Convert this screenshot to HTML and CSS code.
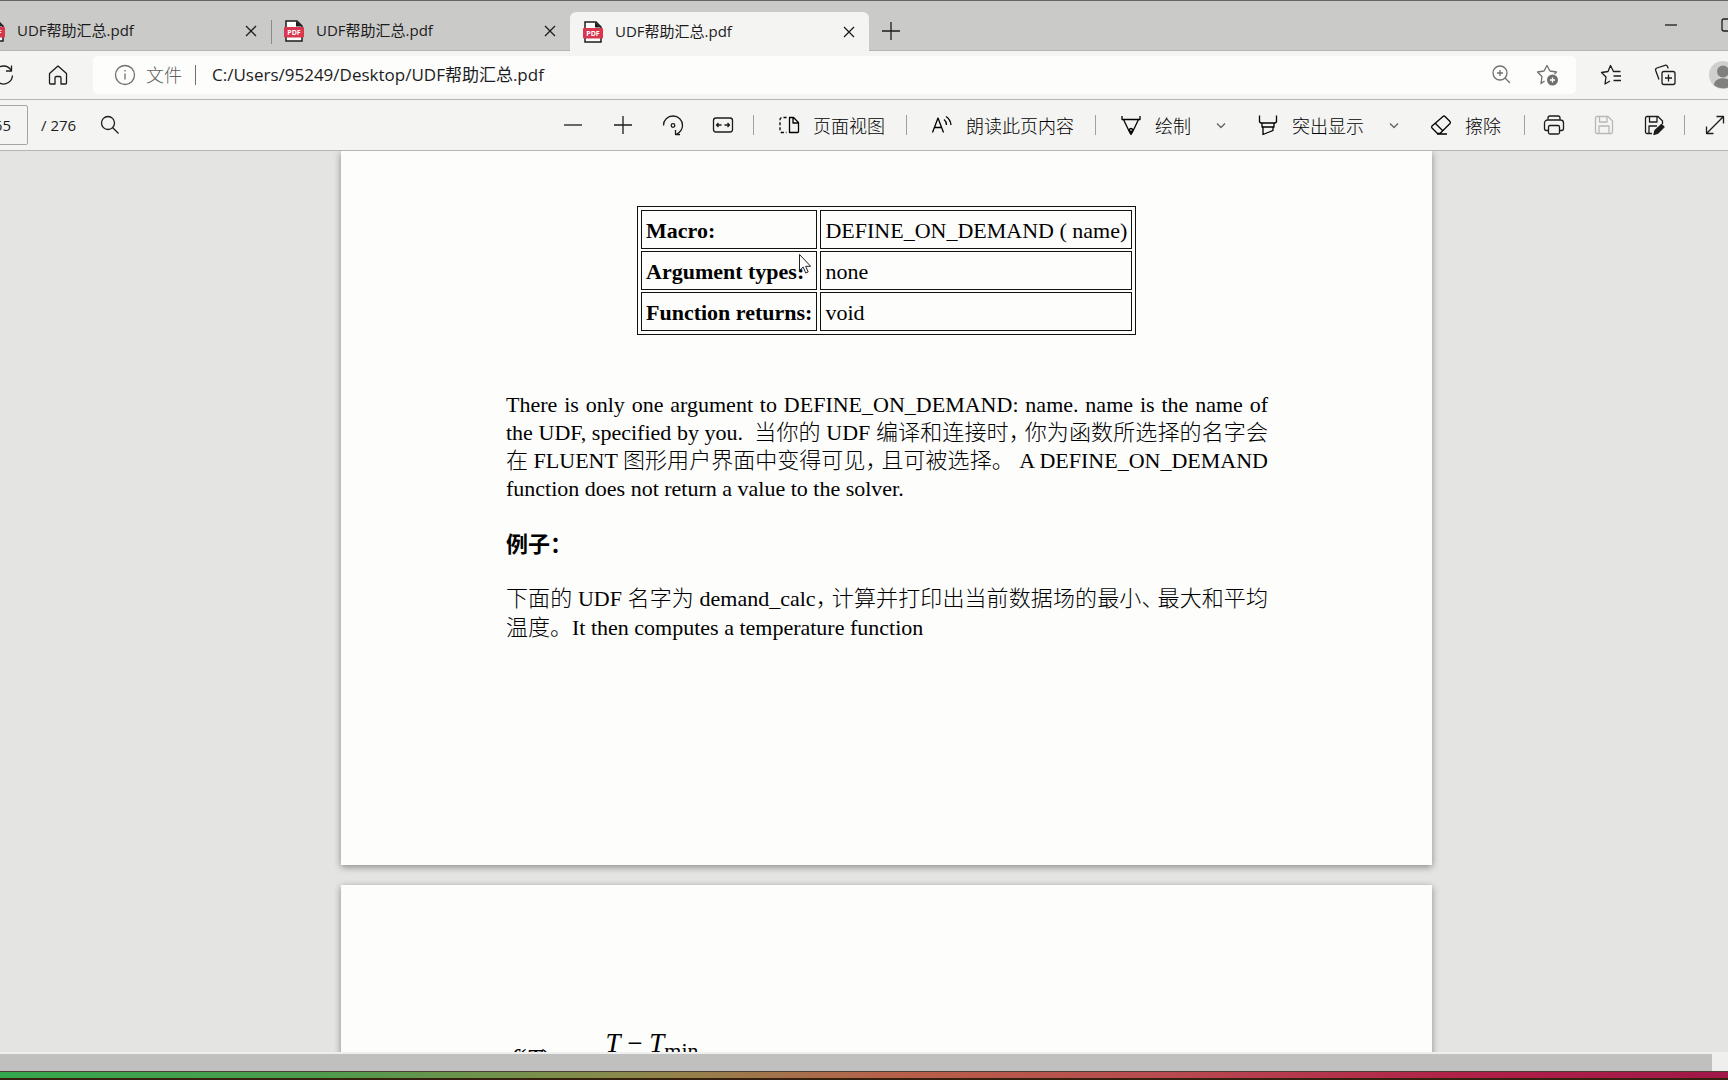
FILE: index.html
```html
<!DOCTYPE html>
<html lang="zh-CN">
<head>
<meta charset="utf-8">
<title>UDF帮助汇总.pdf</title>
<link rel="stylesheet" href="styles.css">
</head>
<body>
<svg class="sprite" aria-hidden="true">
  <symbol id="pdf" viewBox="0 0 20 22">
    <path d="M2 1h11l5 5v15H2z" fill="#fff" stroke="#1c1c1c" stroke-width="1.500"/>
    <path d="M12 1v5.500h6z" fill="#1c1c1c"/>
    <rect x="0" y="7" width="20" height="10.500" rx="1" fill="#d9364f"/>
    <text x="10" y="15" text-anchor="middle" class="pdf-label">PDF</text>
  </symbol>
  <symbol id="close" viewBox="0 0 20 20"><path d="M5 5l10 10M15 5L5 15"/></symbol>
  <symbol id="plus" viewBox="0 0 20 20"><path d="M10 1v18M1 10h18"/></symbol>
  <symbol id="minus" viewBox="0 0 20 20"><path d="M1 10h18"/></symbol>
  <symbol id="chevron" viewBox="0 0 10 10"><path d="M1 3.500l4 4 4-4"/></symbol>
</svg>

<header class="tabs">
  <div class="tab">
    <svg class="pdf"><use href="#pdf"/></svg><span class="tab-title">UDF帮助汇总.pdf</span>
    <button class="plain" aria-label="关闭标签页"><svg class="icon"><use href="#close"/></svg></button>
  </div>
  <div class="tab divided">
    <svg class="pdf"><use href="#pdf"/></svg><span class="tab-title">UDF帮助汇总.pdf</span>
    <button class="plain" aria-label="关闭标签页"><svg class="icon"><use href="#close"/></svg></button>
  </div>
  <div class="tab active">
    <svg class="pdf"><use href="#pdf"/></svg><span class="tab-title">UDF帮助汇总.pdf</span>
    <button class="plain" aria-label="关闭标签页"><svg class="icon"><use href="#close"/></svg></button>
  </div>
  <button class="plain new-tab" aria-label="新建标签页"><svg class="icon"><use href="#plus"/></svg></button>
  <div class="window-controls">
    <button class="plain" aria-label="最小化"><svg class="icon" viewBox="0 0 20 20"><path d="M4 10h12"/></svg></button>
    <button class="plain" aria-label="最大化"><svg class="icon" viewBox="0 0 20 20"><rect x="4" y="4" width="12" height="12" rx="2"/></svg></button>
  </div>
</header>

<nav class="address-row">
  <button class="plain" aria-label="刷新"><svg class="icon" viewBox="0 0 20 20"><path d="M19.500 10.500A9 9 0 1 1 18 5M18.500 0.500V6H13"/></svg></button>
  <button class="plain home" aria-label="主页"><svg class="icon" viewBox="0 0 20 20"><path d="M1.500 8.500L10 1l8.500 7.500V18a1 1 0 0 1-1 1H13v-6a1.500 1.500 0 0 0-1.500-1.500h-3A1.500 1.500 0 0 0 7 13v6H2.500a1 1 0 0 1-1-1z"/></svg></button>
  <div class="address">
    <svg class="icon gray" viewBox="0 0 20 20"><circle cx="10" cy="10" r="9.500"/><path d="M10 8.500v6M10 5v1.500"/></svg>
    <label class="scheme" for="url">文件</label>
    <i class="bar"></i>
    <input id="url" class="url" type="text" value="C:/Users/95249/Desktop/UDF帮助汇总.pdf">
    <button class="plain" aria-label="缩放"><svg class="icon gray" viewBox="0 0 20 20"><circle cx="9" cy="8" r="7"/><path d="M14 13l5 5M9 5v6M6 8h6"/></svg></button>
    <button class="plain star" aria-label="收藏"><svg class="icon gray" viewBox="0 0 20 20"><path d="M7.500 16L4 18.500l1-7L0.500 7l6.500-1L10 0.500 13 6l6.500 1-2 2"/><circle cx="15.500" cy="15" r="5.500" class="solid"/><path class="white" d="M15.500 12.500v5M13 15h5"/></svg></button>
  </div>
  <div class="browser-tools">
    <button class="plain" aria-label="收藏夹"><svg class="icon" viewBox="0 0 20 20"><path d="M9 16l-5 3 1-7L0.500 7.500 7 6.500 9.500 0.500 12.500 6.500h7M12.500 11H20M12.500 15.500H20"/></svg></button>
    <button class="plain" aria-label="集锦"><svg class="icon" viewBox="0 0 20 20"><rect x="7" y="6.500" width="13" height="13" rx="2"/><path d="M13.500 9.500v7M10 13h7M4 14.500L.7 5.500a2 2 0 0 1 1.200-2.500L10 .3a2 2 0 0 1 2.500 1.200l.7 2"/></svg></button>
    <button class="plain" aria-label="个人资料"><svg class="avatar" viewBox="0 0 28 28"><circle cx="14" cy="14" r="14" fill="#d0d0cf"/><circle cx="14" cy="10.500" r="6" fill="#80807f"/><path d="M5 24c0-9 18-9 18 0a14 14 0 0 1-18 0z" fill="#80807f"/></svg></button>
  </div>
</nav>

<div class="toolbar">
  <div class="pager">
    <input class="page-number" type="text" value="65" aria-label="页码">
    <span class="total">/ 276</span>
    <button class="plain" aria-label="查找"><svg class="icon" viewBox="0 0 20 20"><circle cx="8" cy="8" r="6.500"/><path d="M12.500 12.500l6 6"/></svg></button>
  </div>
  <div class="tools">
    <button class="plain" aria-label="缩小"><svg class="icon"><use href="#minus"/></svg></button>
    <button class="plain" aria-label="放大"><svg class="icon"><use href="#plus"/></svg></button>
    <button class="plain" aria-label="旋转"><svg class="icon" viewBox="0 0 20 20"><path d="M0.500 10.500C0.500 5 4.500 1 10 1s9.500 4 9.500 9.500c0 3.500-2.500 7-6.500 9M12.500 15v4.500H17"/><circle cx="10" cy="10.500" r="1.800"/></svg></button>
    <button class="plain" aria-label="适应宽度"><svg class="icon" viewBox="0 0 20 20"><rect x="0.500" y="3" width="19" height="14" rx="2.500"/><path d="M3.500 10H8.500M5.500 8L3.500 10l2 2M11.500 10h5M14.500 8l2 2-2 2"/></svg></button>
  </div>
  <div class="group view"><button class="plain labelled"><svg class="icon" viewBox="0 0 20 20"><path d="M10.500 2.500h4l5 5v9a1 1 0 0 1-1 1h-8zM14 2.500V8h5.500"/><path class="dash" d="M7.500 2.500H3a2 2 0 0 0-2 2v11a2 2 0 0 0 2 2h4.500"/></svg>页面视图</button></div>
  <div class="group read"><button class="plain labelled"><svg class="icon" viewBox="0 0 20 20"><path d="M0.500 17.500L6 3l5.500 14.500M2.500 12.500h7M12 4.500q2.500 2 2.500 5.500M14 1.500q4.500 3 5 8.500"/></svg>朗读此页内容</button></div>
  <div class="group draw">
    <button class="plain labelled"><svg class="icon" viewBox="0 0 20 20"><path d="M1 1v3.500h18V1M2.500 4.500l6 12.500h3l6-12.500M8.500 17l1.500 2.500 1.500-2.500"/><circle cx="10" cy="15" r="1.500"/></svg>绘制</button>
    <button class="plain more" aria-label="绘制选项"><svg class="chev"><use href="#chevron"/></svg></button>
    <button class="plain labelled"><svg class="icon" viewBox="0 0 20 20"><path d="M1.500 0.500V6a2 2 0 0 0 2 2h13a2 2 0 0 0 2-2V0.500M4 8v4h12V8M5 12v7.500l10-4V12"/></svg>突出显示</button>
    <button class="plain more" aria-label="突出显示选项"><svg class="chev"><use href="#chevron"/></svg></button>
    <button class="plain labelled"><svg class="icon" viewBox="0 0 20 20"><path d="M12 1.500a1.500 1.500 0 0 1 2 0l5 5a1.500 1.500 0 0 1 0 2L9 18.500H6.500L1 13a1.500 1.500 0 0 1 0-2zM4.500 8.500l7.500 7.500M6 19h10"/></svg>擦除</button>
  </div>
  <div class="group files">
    <button class="plain" aria-label="打印"><svg class="icon" viewBox="0 0 20 20"><path d="M4 5V3a2 2 0 0 1 2-2h8a2 2 0 0 1 2 2v2M4 15.500H2.500a2 2 0 0 1-2-2V8a3 3 0 0 1 3-3h13a3 3 0 0 1 3 3v5.500a2 2 0 0 1-2 2H16"/><rect x="4.500" y="10.500" width="11" height="8.500" rx="1.500"/></svg></button>
    <button class="plain" aria-label="保存" disabled><svg class="icon pale" viewBox="0 0 20 20"><path d="M3 1.500h11l4.500 4.500v11a1.500 1.500 0 0 1-1.500 1.500H3A1.500 1.500 0 0 1 1.500 17V3A1.500 1.500 0 0 1 3 1.500zM5.500 1.500V7h7.500V1.500M5 18.500V11h10v7.500"/></svg></button>
    <button class="plain" aria-label="另存为"><svg class="icon" viewBox="0 0 20 20"><path d="M8 18.500H3A1.500 1.500 0 0 1 1.500 17V3A1.500 1.500 0 0 1 3 1.500h11L18.500 6v3M5.500 1.500V7h7.500V1.500M5 18.500V11h8"/><path d="M10 19.500l1-4 6.500-6 2.500 2.500-6.500 6.500z" fill="currentColor"/></svg></button>
  </div>
  <div class="group full"><button class="plain" aria-label="全屏"><svg class="icon" viewBox="0 0 20 20"><path d="M2 18L18 2M11.500 1.500h7v7M1.500 11.500v7h7"/></svg></button></div>
</div>

<main class="viewer">
  <article class="page first">
    <table class="macro">
      <tr><th scope="row">Macro:</th><td>DEFINE_ON_DEMAND ( name)</td></tr>
      <tr><th scope="row">Argument types:</th><td>none</td></tr>
      <tr><th scope="row">Function returns:</th><td>void</td></tr>
    </table>
    <svg class="cursor" viewBox="0 0 12 20"><path d="M.5.5v16l3.700-3.500 2.500 6 2.500-1-2.500-5.700h5z" fill="#fff" stroke="#222"/></svg>
    <p class="text">
      <span class="line">There is only one argument to DEFINE_ON_DEMAND: name. name is the name of</span>
      <span class="line">the UDF, specified by you.&nbsp; 当你的 UDF 编译和连接时<span class="mark">，</span>你为函数所选择的名字会</span>
      <span class="line">在 FLUENT 图形用户界面中变得可见<span class="mark">，</span>且可被选择。 A DEFINE_ON_DEMAND</span>
      <span class="line last">function does not return a value to the solver.</span>
    </p>
    <h2 class="heading">例子：</h2>
    <p class="text loose">
      <span class="line">下面的 UDF 名字为 demand_calc<span class="mark">，</span>计算并打印出当前数据场的最小<span class="mark">、</span>最大和平均</span>
      <span class="line last">温度。It then computes a temperature function</span>
    </p>
  </article>
  <article class="page second">
    <div class="formula"><span class="lhs"><i>f</i>(<i>T</i>)</span><span class="numerator"><i>T</i> − <i>T</i><sub>min</sub></span></div>
  </article>
</main>
<div class="scrollbar"><div class="thumb"></div></div>
<footer class="desktop"></footer>
</body>
</html>
```
FILE: styles.css
```css
* { box-sizing: border-box; }
body {
  margin: 0;
  height: 100vh;
  display: flex;
  flex-direction: column;
  overflow: hidden;
  background: #e4e4e3;
  color: #1c1c1c;
  font-family: "Open Sans", "Noto Sans CJK SC", sans-serif;
  font-size: 18px;
}
.sprite { display: none; }
.icon { display: block; width: 20px; height: 20px; flex: none; overflow: visible; }
.icon, .chev { fill: none; stroke: currentColor; stroke-width: 1.3; stroke-linejoin: round; }
.gray { color: #707070; }
.pale { color: #b8b8b7; }
.solid { fill: currentColor; stroke: none; }
.white { stroke: #fff; }
.dash { stroke-dasharray: 3 2; }
.chev { display: block; width: 10px; height: 10px; color: #606060; }
.plain { border: 0; padding: 0; background: none; color: inherit; font: inherit; flex: none; }

.tabs {
  flex: none;
  display: flex;
  height: 51px;
  padding-top: 11px;
  border-top: 1px solid #666564;
  border-bottom: 1px solid #b5b5b4;
  background: #cacac9;
}
.tab {
  width: 299px;
  flex: none;
  display: flex;
  align-items: center;
  gap: 12px;
  padding: 0 10px 0 13px;
  font-size: 15px;
  position: relative;
}
.tab:first-child { margin-left: -28px; }
.divided::before { content: ""; position: absolute; left: 0; top: 8px; width: 1px; height: 24px; background: #8a8a89; }
.active { background: #f4f4f3; border-radius: 6px 6px 0 0; margin-bottom: -1px; }
.pdf { width: 20px; height: 22px; flex: none; }
.pdf-label { font: bold 7px "Open Sans", sans-serif; fill: #fff; }
.tab-title { flex: 1; padding-bottom: 3px; }
.new-tab { margin-left: 12px; }
.window-controls { margin: -4px -10px 0 auto; display: flex; gap: 37px; }
.window-controls .plain { height: 34px; }

.address-row {
  flex: none;
  display: flex;
  align-items: center;
  height: 49px;
  border-bottom: 1px solid #b5b5b4;
  background: #f4f4f3;
}
.address-row > .plain:first-child { margin-left: -7px; }
.home { margin-left: 35px; }
.address {
  flex: 1;
  min-width: 0;
  display: flex;
  align-items: center;
  height: 38px;
  margin-left: 25px;
  padding: 0 19px 0 22px;
  border-radius: 5px;
  background: #fdfdfc;
}
.scheme { margin-left: 11px; padding-bottom: 3px; color: #606060; font-weight: 300; }
.bar { width: 1px; height: 20px; margin: 0 16px 0 13px; background: #707070; }
.url { flex: 1; min-width: 0; border: 0; padding: 0 0 3px; background: none; color: inherit; font: inherit; font-size: 17px; }
.star { margin-left: 26px; }
.browser-tools { display: flex; align-items: center; gap: 34px; margin: 0 -9px 0 25px; }
.avatar { display: block; width: 28px; height: 28px; }

.toolbar {
  flex: none;
  display: flex;
  align-items: center;
  height: 51px;
  border-bottom: 1px solid #b5b5b4;
  background: #f4f4f3;
}
.toolbar .plain, .pager { display: flex; align-items: center; }
.pager { margin-right: auto; }
.page-number {
  width: 60px;
  height: 40px;
  margin-left: -32px;
  padding: 0 16px 0 0;
  border: 1px solid #a5a5a4;
  border-radius: 2px;
  background: none;
  text-align: right;
  color: inherit;
  font: inherit;
  font-size: 15px;
}
.total { font-size: 15px; margin: 0 24px 0 13px; }
.tools { display: flex; gap: 30px; padding-right: 20px; }
.group { display: flex; align-items: center; position: relative; padding-left: 26px; }
.group::before { content: ""; position: absolute; left: 0; top: 50%; width: 1px; height: 20px; margin-top: -10px; background: #a0a09f; }
.toolbar .labelled { gap: 14px; color: #000; font-weight: 300; }
.view, .read { padding-right: 21px; }
.draw { padding-right: 23px; }
.more { margin: 0 32px 0 25px; }
.files { gap: 30px; padding: 0 20px; }
.full { padding: 0 3px 0 21px; }

.viewer {
  flex: 1;
  min-height: 0;
  overflow: hidden;
  display: flex;
  flex-direction: column;
  align-items: center;
  gap: 20px;
  padding-left: 45px;
}
.page {
  flex: none;
  position: relative;
  width: 1091px;
  padding: 0 164px 0 165px;
  background: #fdfdfc;
  box-shadow: 0 2px 7px rgba(0, 0, 0, 0.4);
  color: #000;
  font: 22px/28px "Liberation Serif", "Noto Sans CJK SC", serif;
}
.first { height: 714px; padding-top: 55px; }
.second { height: 714px; padding-top: 144px; }
.macro { width: 498px; margin: 0 auto 56px 131px; border: 1px solid #111; border-spacing: 3px 2px; padding: 1px 0; }
.macro th, .macro td { height: 39px; border: 1px solid #111; padding: 2px 4px 0; text-align: left; white-space: nowrap; }
.cursor { position: absolute; left: 458px; top: 103px; width: 12px; height: 20px; }
.text { margin: 0; font-weight: 300; }
.loose { line-height: 29px; }
.line { display: block; white-space: nowrap; text-align: justify; text-align-last: justify; }
.last { text-align-last: left; }
.mark { font-feature-settings: "halt"; margin-right: 5px; }
.heading { margin: 28px 0 25px; font-size: 22px; line-height: 28px; }
.formula { display: flex; font-size: 27px; }
.lhs { margin: 16px 0 0 4px; }
.numerator { margin-left: 55px; }
.formula sub { font-size: 22px; }

.scrollbar { flex: none; height: 19px; padding: 2px 16px 0 0; background: #efefee; }
.thumb { height: 17px; background: #c0c0bf; }
.desktop {
  flex: none;
  height: 9px;
  border-top: 1px solid #4a4038;
  border-bottom: 2px solid #35200f;
  background: linear-gradient(90deg, #35a84c 0%, #4c9c4c 18%, #8a8a4c 36%, #b8604a 52%, #b84a50 68%, #b02048 85%, #a01848 100%);
}
```
